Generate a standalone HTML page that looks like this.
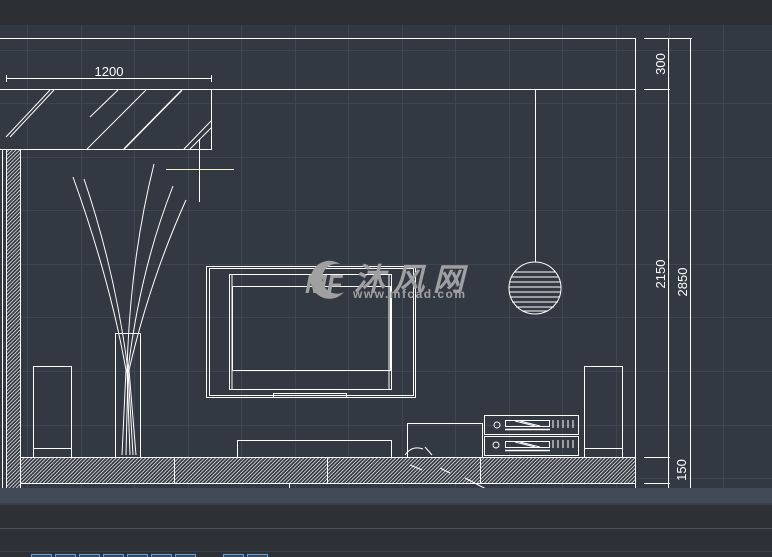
<!DOCTYPE html>
<html><head><meta charset="utf-8"><style>
html,body{margin:0;padding:0;background:#2c2f34;}
svg{display:block}
text{font-family:"Liberation Sans",sans-serif}
</style></head><body>
<svg width="772" height="557" viewBox="0 0 772 557" xmlns="http://www.w3.org/2000/svg">
<defs>
<pattern id="h" width="2.6" height="2.6" patternUnits="userSpaceOnUse" patternTransform="rotate(45)">
<rect width="3" height="3" fill="#333943"/><line x1="0" y1="0" x2="0" y2="3" stroke="#f0f0f0" stroke-width="1.5"/>
</pattern>
</defs>
<rect width="772" height="557" fill="#2c2f34"/>
<rect x="0" y="25" width="772" height="463" fill="#333943"/>
<g stroke="#3f4652" stroke-width="1">
<line x1="27.5" y1="25" x2="27.5" y2="488"/><line x1="81.5" y1="25" x2="81.5" y2="488"/><line x1="134.5" y1="25" x2="134.5" y2="488"/><line x1="188.5" y1="25" x2="188.5" y2="488"/><line x1="241.5" y1="25" x2="241.5" y2="488"/><line x1="295.5" y1="25" x2="295.5" y2="488"/><line x1="348.5" y1="25" x2="348.5" y2="488"/><line x1="402.5" y1="25" x2="402.5" y2="488"/><line x1="455.5" y1="25" x2="455.5" y2="488"/><line x1="509.5" y1="25" x2="509.5" y2="488"/><line x1="562.5" y1="25" x2="562.5" y2="488"/><line x1="616.5" y1="25" x2="616.5" y2="488"/><line x1="669.5" y1="25" x2="669.5" y2="488"/><line x1="723.5" y1="25" x2="723.5" y2="488"/>
<line x1="0" y1="50.5" x2="772" y2="50.5"/><line x1="0" y1="103.5" x2="772" y2="103.5"/><line x1="0" y1="157.5" x2="772" y2="157.5"/><line x1="0" y1="210.5" x2="772" y2="210.5"/><line x1="0" y1="264.5" x2="772" y2="264.5"/><line x1="0" y1="317.5" x2="772" y2="317.5"/><line x1="0" y1="371.5" x2="772" y2="371.5"/><line x1="0" y1="425.5" x2="772" y2="425.5"/><line x1="0" y1="478.5" x2="772" y2="478.5"/>
</g>
<g stroke="#ffffff" stroke-width="1" fill="none">
<line x1="0" y1="38.5" x2="636" y2="38.5"/>
<line x1="635.5" y1="38" x2="635.5" y2="488"/>
<line x1="0" y1="89.5" x2="636" y2="89.5"/>
<polyline points="0,149.5 211.5,149.5 211.5,89"/>
<line x1="6" y1="78.5" x2="212" y2="78.5"/><line x1="6.5" y1="75" x2="6.5" y2="82"/><line x1="211.5" y1="75" x2="211.5" y2="82"/>
<line x1="6" y1="137" x2="50" y2="90"/><line x1="10" y1="137" x2="54" y2="90"/>
<line x1="90" y1="117" x2="118" y2="90"/><line x1="87" y1="149" x2="146" y2="90"/><line x1="124" y1="149" x2="182" y2="90" stroke-width="1.5"/>
<line x1="184" y1="149" x2="211" y2="121"/><line x1="190" y1="149" x2="211" y2="128"/>
<line x1="166" y1="169.5" x2="234" y2="169.5" stroke="#f0f0c0"/><line x1="199.5" y1="139" x2="199.5" y2="202"/>
<line x1="2.5" y1="150" x2="2.5" y2="488"/><line x1="6.5" y1="150" x2="6.5" y2="488"/>
<rect x="7" y="150" width="13" height="338" fill="url(#h)" stroke="none"/>
<line x1="20.5" y1="150" x2="20.5" y2="488"/>
<rect x="21" y="457" width="614" height="26" fill="url(#h)" stroke="none"/>
<line x1="21" y1="457.5" x2="636" y2="457.5"/><line x1="21" y1="483.5" x2="636" y2="483.5"/>
<line x1="174.5" y1="457" x2="174.5" y2="483"/><line x1="327.5" y1="457" x2="327.5" y2="483"/><line x1="480.5" y1="457" x2="480.5" y2="483"/><line x1="289.5" y1="483" x2="289.5" y2="488"/>
<rect x="33.5" y="366.5" width="38" height="91"/><line x1="33" y1="448.5" x2="72" y2="448.5"/>
<rect x="584.5" y="366.5" width="38" height="91"/><line x1="584" y1="448.5" x2="623" y2="448.5"/>
<rect x="115.5" y="333.5" width="25" height="124"/>
<path d="M73,177 Q110,280 126,370 L122,455"/>
<path d="M84,179 Q115,270 128,370 L126,455"/>
<path d="M154,164 Q130,260 127,370 L130,455"/>
<path d="M173,186 Q140,270 128,370 L133,455"/>
<path d="M186,200 Q150,280 129,370 L136,455"/>
<rect x="206.5" y="266.5" width="209" height="131"/><rect x="209.5" y="268.5" width="204" height="127"/>
<rect x="229.5" y="274.5" width="162" height="115"/><rect x="232.5" y="286.5" width="158" height="84"/><line x1="232" y1="274" x2="232" y2="389"/><line x1="389" y1="274" x2="389" y2="389"/>
<rect x="273.5" y="393.5" width="73" height="4"/>
<rect x="237.5" y="440.5" width="154" height="17"/>
<rect x="407.5" y="423.5" width="75" height="34"/>
<path d="M405,455 Q412,445 423,449 M425,447 L432,455 M410,465 L422,470 M440,468 L450,473 M465,478 L488,490"/>
<rect x="484.5" y="415.5" width="94" height="19"/><rect x="484.5" y="436.5" width="94" height="19"/>
<circle cx="497" cy="425" r="3"/><circle cx="496" cy="445" r="3"/>
<rect x="505.5" y="420.5" width="44" height="6"/><line x1="505" y1="429.5" x2="550" y2="429.5" stroke-width="1.5"/>
<rect x="505.5" y="441.5" width="44" height="6"/><line x1="505" y1="450.5" x2="550" y2="450.5" stroke-width="1.5"/>
<path d="M515,421 L535,426 M520,421 L540,426 M515,442 L535,447 M520,442 L540,447"/>
<path d="M553,420v8M558,420v8M563,420v8M568,420v8M573,420v8M553,440v8M558,440v8M563,440v8M568,440v8M573,440v8"/>
<line x1="535.5" y1="89" x2="535.5" y2="262"/>
<circle cx="535" cy="288" r="26"/>
<path d="M515,272h40M511,277h48M510,282h50M509,287h52M509,292h52M510,297h50M512,302h46M516,307h38M522,311h26"/>
<line x1="644" y1="38.5" x2="692" y2="38.5"/><line x1="644" y1="89.5" x2="670" y2="89.5"/>
<line x1="668.5" y1="38" x2="668.5" y2="488"/><line x1="690.5" y1="38" x2="690.5" y2="488"/>
<line x1="644" y1="457.5" x2="670" y2="457.5"/><line x1="644" y1="483.5" x2="670" y2="483.5"/>
</g>
<g fill="#ffffff" font-size="13">
<text x="109" y="76" text-anchor="middle">1200</text>
<text transform="translate(665,64) rotate(-90)" text-anchor="middle">300</text>
<text transform="translate(665,274) rotate(-90)" text-anchor="middle">2150</text>
<text transform="translate(687,282) rotate(-90)" text-anchor="middle">2850</text>
<text transform="translate(686,470) rotate(-90)" text-anchor="middle">150</text>
</g>
<g fill="#a0a0a0">
<path d="M340,264 A19,19 0 1 0 344,292 A15,15 0 1 1 340,264Z"/>
<text x="305" y="293" font-size="26" font-weight="bold" font-style="italic">MF</text>
<text x="354" y="290" font-size="31" font-weight="bold" font-style="italic" font-family="'Liberation Sans','Noto Sans CJK SC',sans-serif" textLength="110">沐风网</text>
<text x="353" y="298" font-size="12" font-weight="bold" textLength="112">www.mfcad.com</text>
</g>
<rect x="0" y="488" width="772" height="15" fill="#434a57"/>
<rect x="0" y="503" width="772" height="2" fill="#3b414b"/>
<rect x="0" y="505" width="772" height="52" fill="#2d3035"/>
<rect x="0" y="528" width="772" height="1" fill="#4b5059"/>
<rect x="0" y="551" width="772" height="1" fill="#3b414b"/>
<g fill="#3d4654" stroke="#5aa6e6">
<rect x="31.5" y="554.5" width="20" height="6"/><rect x="55.5" y="554.5" width="20" height="6"/><rect x="79.5" y="554.5" width="20" height="6"/><rect x="103.5" y="554.5" width="20" height="6"/><rect x="127.5" y="554.5" width="20" height="6"/><rect x="151.5" y="554.5" width="20" height="6"/><rect x="175.5" y="554.5" width="20" height="6"/><rect x="223.5" y="554.5" width="20" height="6"/><rect x="247.5" y="554.5" width="20" height="6"/>
</g>
</svg>
</body></html>
